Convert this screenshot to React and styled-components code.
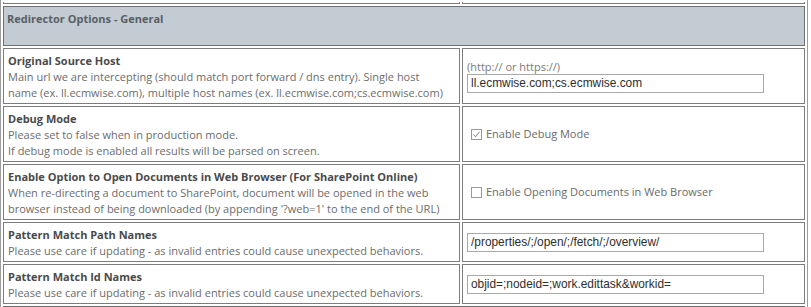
import React from "react";
import styled, { createGlobalStyle } from "styled-components";

const GlobalStyle = createGlobalStyle`
  html, body {
    margin: 0;
    padding: 0;
    background: #ffffff;
  }
  body {
    font-family: "Open Sans", "Noto Sans", sans-serif;
    overflow: hidden;
  }
`;

const Table = styled.table`
  width: 808px;
  table-layout: fixed;
  border-collapse: separate;
  border-spacing: 2px;
  border-left: 1px solid #9c9c9c;
  border-right: 1px solid #9c9c9c;
  font-size: 11px;
  line-height: 16px;
`;

const Cell = styled.td`
  box-sizing: border-box;
  border: 1px solid #7d7d7d;
  padding: ${(p) => (p.$middle ? "4px 4px" : "4px 12px 2px 4px")};
  vertical-align: ${(p) => (p.$middle ? "middle" : "top")};
  color: #6a6a6a;
`;

const CutCell = styled.td`
  box-sizing: border-box;
  height: 2px;
  padding: 0;
  border: 1px solid #7d7d7d;
  border-top: none;
`;

const HeaderCell = styled.td`
  box-sizing: border-box;
  height: 40px;
  padding: 4px 3px 0 3px;
  vertical-align: top;
  background: #c3cbd3;
  border: 1px solid #6f6f6f;
  color: #5a5f66;
  font-weight: 700;
`;

const Title = styled.div`
  color: #4a4a4a;
  font-weight: 700;
`;

const Desc = styled.div`
  color: #6c6c6c;
`;

const Hint = styled.div`
  color: #7a7a7a;
  line-height: 14px;
`;

const TextBox = styled.input`
  box-sizing: border-box;
  display: block;
  width: 297px;
  height: 19px;
  margin: 0;
  padding: 0 3px;
  border: 1px solid #a9a9a9;
  font-family: "Liberation Sans", Arial, sans-serif;
  font-size: 11.9px;
  color: #2e2e2e;
  background: #fff;
  outline: none;
`;

const CheckRow = styled.label`
  display: flex;
  align-items: center;
  gap: 4px;
  padding-left: 4px;
  color: #6a6a6a;
`;

const Box = styled.span`
  box-sizing: border-box;
  width: 11px;
  height: 11px;
  border: 1px solid #9a9a9a;
  background: #fff;
  display: inline-flex;
  align-items: center;
  justify-content: center;
`;

function CheckBox({ checked, label }) {
  return (
    <CheckRow>
      <Box>
        {checked && (
          <svg width="9" height="9" viewBox="0 0 9 9">
            <polyline
              points="1.5,4.5 3.5,6.8 7.5,1.8"
              fill="none"
              stroke="#7a7a7a"
              strokeWidth="1"
            />
          </svg>
        )}
      </Box>
      {label}
    </CheckRow>
  );
}

const rows = [
  {
    title: "Original Source Host",
    desc: [
      "Main url we are intercepting (should match port forward / dns entry). Single host name (ex. ll.ecmwise.com), multiple host names (ex. ll.ecmwise.com;cs.ecmwise.com)",
    ],
    hint: "(http:// or https://)",
    value: "ll.ecmwise.com;cs.ecmwise.com",
  },
  {
    title: "Debug Mode",
    desc: [
      "Please set to false when in production mode.",
      "If debug mode is enabled all results will be parsed on screen.",
    ],
    check: { checked: true, label: "Enable Debug Mode" },
  },
  {
    title: "Enable Option to Open Documents in Web Browser (For SharePoint Online)",
    desc: [
      "When re-directing a document to SharePoint, document will be opened in the web browser instead of being downloaded (by appending '?web=1' to the end of the URL)",
    ],
    check: { checked: false, label: "Enable Opening Documents in Web Browser" },
  },
  {
    title: "Pattern Match Path Names",
    desc: ["Please use care if updating - as invalid entries could cause unexpected behaviors."],
    value: "/properties/;/open/;/fetch/;/overview/",
  },
  {
    title: "Pattern Match Id Names",
    desc: ["Please use care if updating - as invalid entries could cause unexpected behaviors."],
    value: "objid=;nodeid=;work.edittask&workid=",
  },
];

export default function App() {
  return (
    <>
      <GlobalStyle />
      <Table>
        <colgroup>
          <col style={{ width: 457 }} />
          <col style={{ width: 343 }} />
        </colgroup>
        <tbody>
          <tr>
            <CutCell />
            <CutCell />
          </tr>
          <tr>
            <HeaderCell colSpan={2}>Redirector Options - General</HeaderCell>
          </tr>
          {rows.map((r) => (
            <tr key={r.title}>
              <Cell>
                <Title>{r.title}</Title>
                {r.desc.map((d) => (
                  <Desc key={d}>{d}</Desc>
                ))}
              </Cell>
              <Cell $middle>
                {r.hint && <Hint>{r.hint}</Hint>}
                {r.value !== undefined && <TextBox defaultValue={r.value} />}
                {r.check && <CheckBox {...r.check} />}
              </Cell>
            </tr>
          ))}
          <tr>
            <HeaderCell colSpan={2} />
          </tr>
        </tbody>
      </Table>
    </>
  );
}
